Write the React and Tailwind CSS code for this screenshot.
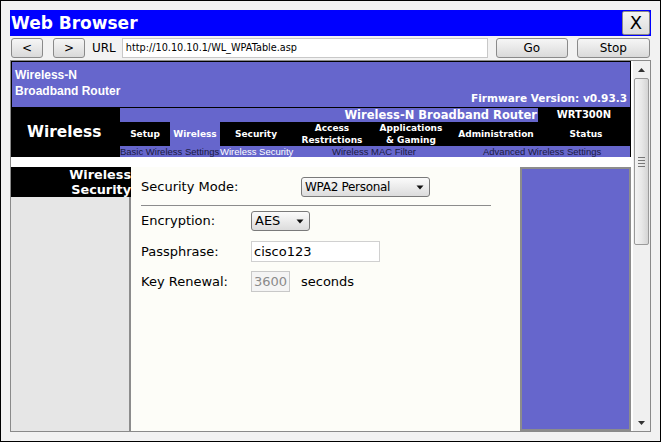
import React from "react";

const tabs = [
  { w: "w-[50px]", lines: ["Setup"], active: false },
  { w: "w-[50px]", lines: ["Wireless"], active: true },
  { w: "w-[72px]", lines: ["Security"], active: false },
  { w: "w-[80px]", lines: ["Access", "Restrictions"], active: false },
  { w: "w-[78px]", lines: ["Applications", "& Gaming"], active: false },
  { w: "w-[92px]", lines: ["Administration"], active: false },
  { w: "w-[88px]", lines: ["Status"], active: false },
];

function Caret() {
  return (
    <svg width="8" height="5" viewBox="0 0 8 5" className="shrink-0">
      <path d="M0.5 0.5 L7.5 0.5 L4 4.5 Z" fill="#111" />
    </svg>
  );
}

function Select({ w, children, textCls }) {
  return (
    <div
      className={`${w} h-[20px] flex items-center justify-between pl-[3px] pr-[5px] border border-[#7a7a7a] rounded-[3px] bg-gradient-to-b from-[#fbfbfb] to-[#dcdcdc] text-black`}
    >
      <span className={textCls}>{children}</span>
      <Caret />
    </div>
  );
}

function ChromeButton({ w, children, cls = "" }) {
  return (
    <div
      className={`${w} h-[20px] flex items-center justify-center border border-[#8a8a8a] rounded-[3px] bg-gradient-to-b from-[#f6f6f6] to-[#dadada] text-[12px] text-black ${cls}`}
    >
      {children}
    </div>
  );
}

export default function App() {
  return (
    <div className="w-[661px] h-[442px] border border-black bg-[#f2f2f2] px-[9px] pt-[9px] font-['DejaVu_Sans',sans-serif] overflow-hidden">
      {/* Title bar */}
      <div className="h-[26px] bg-[#0000ff] flex items-center justify-between">
        <span className="text-white font-bold text-[17px] leading-none pl-px">
          Web Browser
        </span>
        <div className="w-[28px] h-[24px] mr-px border border-[#8a8a8a] rounded-[2px] bg-gradient-to-b from-[#f4f4f4] to-[#dddddd] flex items-center justify-center text-[18px] leading-none text-black">
          X
        </div>
      </div>

      {/* Address row */}
      <div className="mt-[2px] h-[20px] flex items-center">
        <ChromeButton w="w-[32px]" cls="ml-px">&lt;</ChromeButton>
        <ChromeButton w="w-[32px]" cls="ml-[10px]">&gt;</ChromeButton>
        <span className="ml-[7px] text-[12px] text-black">URL</span>
        <div className="ml-[6px] w-[366px] h-[20px] border border-[#c8c8c8] bg-white flex items-center pl-[3px] text-[9.7px] text-black">
          http://10.10.10.1/WL_WPATable.asp
        </div>
        <ChromeButton w="w-[72px]" cls="ml-[8px]">Go</ChromeButton>
        <ChromeButton w="w-[73px]" cls="ml-[9px]">Stop</ChromeButton>
      </div>

      {/* Viewport */}
      <div className="mt-[2px] h-[372px] border border-[#8a8a8a] flex bg-white">
        {/* Page */}
        <div className="w-[622px] h-full flex flex-col bg-white overflow-hidden">
          {/* Header */}
          <div className="w-[620px] h-[47px] shrink-0 border border-black bg-[#6666cc] flex items-end justify-between">
            <div className="pl-[3px] pb-[8px] font-['Liberation_Sans',sans-serif] font-bold text-[12px] leading-[16px] text-white">
              <div>Wireless-N</div>
              <div>Broadband Router</div>
            </div>
            <div className="pr-[3px] pb-[3px] font-bold text-[10.5px] leading-[12px] text-white">
              Firmware Version: v0.93.3
            </div>
          </div>

          {/* Nav zone */}
          <div className="w-[620px] h-[49px] shrink-0 bg-black flex">
            <div className="w-[109px] flex items-center pl-[16px] text-white font-bold text-[15.4px] leading-none">
              Wireless
            </div>
            <div className="w-[510px] flex flex-col">
              <div className="h-[14px] flex">
                <div className="w-[418px] bg-[#6666cc] text-right pr-px text-white font-bold text-[11.5px] leading-[14px]">
                  Wireless-N Broadband Router
                </div>
                <div className="flex-1 flex items-center justify-center text-white font-bold text-[10px] leading-[14px]">
                  WRT300N
                </div>
              </div>
              <div className="h-[24px] flex">
                {tabs.map((t, i) => (
                  <div
                    key={i}
                    className={`${t.w} h-full flex flex-col items-center justify-center text-white font-bold text-[9px] leading-[12px] ${
                      t.active ? "bg-[#6666cc]" : "bg-black"
                    }`}
                  >
                    {t.lines.map((l, j) => (
                      <span key={j}>{l}</span>
                    ))}
                  </div>
                ))}
              </div>
              <div className="h-[11px] bg-[#6666cc] flex font-['Liberation_Sans',sans-serif] text-[9.5px] leading-[11px] text-[#1a1a40]">
                <span className="w-[100px]">Basic Wireless Settings</span>
                <span className="w-[112px] text-white">Wireless Security</span>
                <span className="w-[151px]">Wireless MAC Filter</span>
                <span>Advanced Wireless Settings</span>
              </div>
            </div>
          </div>

          {/* Gap */}
          <div className="h-[10px] shrink-0 bg-white" />

          {/* Body */}
          <div className="w-[620px] flex-1 flex">
            {/* Left column */}
            <div className="w-[120px] flex flex-col">
              <div className="h-[30px] bg-black text-right text-white font-bold text-[12.8px] leading-[15px]">
                <div>Wireless</div>
                <div>Security</div>
              </div>
              <div className="flex-1 bg-[#e6e6e6] border-r-2 border-[#8c8c8c]" />
            </div>

            {/* Middle */}
            <div className="w-[389px] bg-[#fdfdf8] pl-[10px] pt-[10px] text-[13px] text-black">
              <div className="h-[20px] flex items-center">
                <span className="w-[160px]">Security Mode:</span>
                <Select w="w-[129px]" textCls="text-[12px] tracking-[-0.3px]">
                  WPA2 Personal
                </Select>
              </div>
              <div className="mt-[8px] w-[350px] h-px bg-[#8c8c8c]" />
              <div className="mt-[5px] h-[20px] flex items-center">
                <span className="w-[110px]">Encryption:</span>
                <Select w="w-[59px]" textCls="text-[13px]">
                  AES
                </Select>
              </div>
              <div className="mt-[10px] h-[21px] flex items-center">
                <span className="w-[110px]">Passphrase:</span>
                <div className="w-[129px] h-[21px] border border-[#d0d0d0] bg-white flex items-center pl-[2px]">
                  cisco123
                </div>
              </div>
              <div className="mt-[9px] h-[21px] flex items-center">
                <span className="w-[110px]">Key Renewal:</span>
                <div className="w-[39px] h-[21px] border border-[#c8c8c8] bg-[#f4f4f4] flex items-center pl-[2px] text-[#8a8a8a]">
                  3600
                </div>
                <span className="ml-[11px]">seconds</span>
              </div>
            </div>

            {/* Right column */}
            <div className="w-[111px] bg-[#6666cc] border-2 border-[#8c8c8c]" />
          </div>
        </div>

        {/* Scrollbar */}
        <div className="w-[17px] h-full bg-[#f0f0f0] flex flex-col items-center">
          <div className="h-[17px] w-full flex items-center justify-center">
            <svg width="7" height="4" viewBox="0 0 7 4">
              <path d="M0 4 L7 4 L3.5 0 Z" fill="#333" />
            </svg>
          </div>
          <div className="w-[15px] h-[167px] border border-[#9a9a9a] rounded-[2px] bg-gradient-to-r from-[#f4f4f4] via-[#e8e8e8] to-[#d4d4d4] flex flex-col items-center justify-center gap-[2px]">
            <div className="w-[7px] h-px bg-[#777]" />
            <div className="w-[7px] h-px bg-[#777]" />
            <div className="w-[7px] h-px bg-[#777]" />
            <div className="w-[7px] h-px bg-[#777]" />
          </div>
          <div className="flex-1" />
          <div className="h-[17px] w-full flex items-center justify-center">
            <svg width="7" height="4" viewBox="0 0 7 4">
              <path d="M0 0 L7 0 L3.5 4 Z" fill="#333" />
            </svg>
          </div>
        </div>
      </div>
    </div>
  );
}
